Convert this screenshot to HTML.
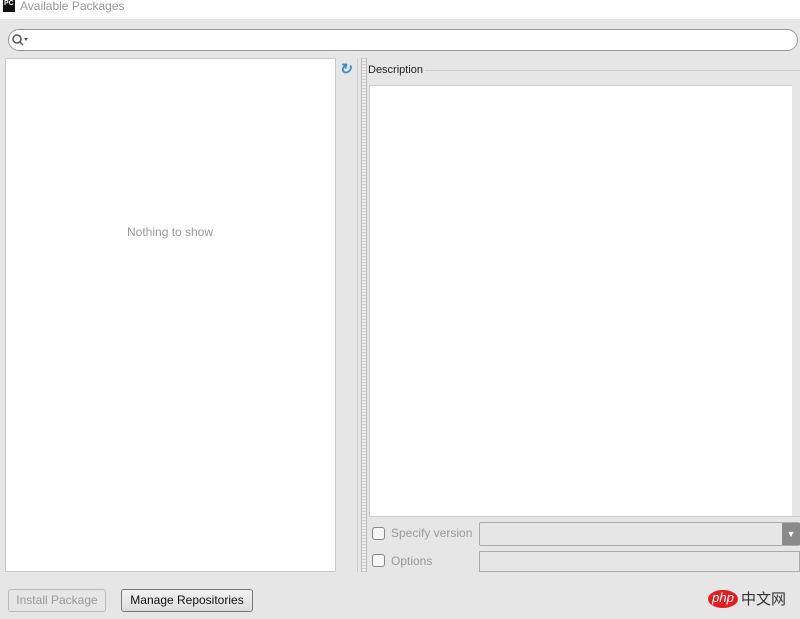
<!DOCTYPE html>
<html><head><style>
body{margin:0;width:800px;height:619px;background:#e6e6e6;font-family:"Liberation Sans",sans-serif;font-size:12px;position:relative;overflow:hidden}
.a{position:absolute;box-sizing:border-box}
</style></head><body>
<div class="a" style="left:0;top:0;width:800px;height:19px;background:#fff"></div>
<div class="a" style="left:3;top:0;left:3px;width:12px;height:12px;background:#111;color:#fff;font-size:7px;font-weight:bold;line-height:7px;padding-left:1px">PC</div>
<div class="a" style="left:20px;top:-1px;color:#999;font-size:12px">Available Packages</div>
<div class="a" style="left:8px;top:29px;width:790px;height:22px;background:#fff;border:1px solid #999;border-radius:11px"></div>
<svg class="a" style="left:11px;top:33px" width="18" height="14"><circle cx="6" cy="6" r="4" fill="none" stroke="#555" stroke-width="1.5"/><line x1="9" y1="9" x2="12" y2="12" stroke="#555" stroke-width="1.5"/><path d="M13 5h4l-2 3z" fill="#555"/></svg>
<div class="a" style="left:5px;top:58px;width:331px;height:514px;background:#fff;border:1px solid #c8c8c8"></div>
<div class="a" style="left:127px;top:225px;color:#999">Nothing to show</div>
<div class="a" style="left:336px;top:58px;width:22px;height:514px;background:#e6e6e6;border-right:1px solid #ccc"></div>
<div class="a" style="left:339px;top:60px;color:#3a8fd0;font-weight:bold;font-size:15px;font-style:italic">↻</div>
<div class="a" style="left:361px;top:58px;width:6px;height:514px;background:repeating-linear-gradient(#ccc 0 1px,#eee 1px 3px);border-left:1px solid #bbb;border-right:1px solid #bbb"></div>
<div class="a" style="left:368px;top:64px;font-size:11px;color:#222">Description</div>
<div class="a" style="left:425px;top:70px;width:375px;height:1px;background:#ccc"></div>
<div class="a" style="left:369px;top:85px;width:423px;height:432px;background:#fff;border-top:1px solid #ccc;border-left:1px solid #ccc"></div>
<div class="a" style="left:369px;top:516px;width:431px;height:1px;background:#ccc"></div>
<div class="a" style="left:372px;top:527px;width:13px;height:13px;border:1px solid #888;border-radius:3px;background:#f6f6f6"></div>
<div class="a" style="left:391px;top:526px;color:#999">Specify version</div>
<div class="a" style="left:479px;top:522px;width:321px;height:24px;border:1px solid #aaa;border-radius:2px;background:#e6e6e6"></div>
<div class="a" style="left:782px;top:523px;width:18px;height:22px;background:#8a8a8a;color:#fff;font-size:9px;text-align:center;line-height:22px">▼</div>
<div class="a" style="left:372px;top:554px;width:13px;height:13px;border:1px solid #888;border-radius:3px;background:#f6f6f6"></div>
<div class="a" style="left:391px;top:554px;color:#999">Options</div>
<div class="a" style="left:479px;top:551px;width:321px;height:21px;border:1px solid #aaa;background:#e6e6e6"></div>
<div class="a" style="left:8px;top:589px;width:98px;height:23px;border:1px solid #bbb;border-radius:3px;color:#999;text-align:center;line-height:21px">Install Package</div>
<div class="a" style="left:121px;top:589px;width:132px;height:23px;border:1px solid #777;border-radius:3px;background:linear-gradient(#f2f2f2,#dcdcdc);color:#111;text-align:center;line-height:21px">Manage Repositories</div>
<div class="a" style="left:708px;top:590px;width:30px;height:18px;border-radius:50%;background:#e02020;color:#fff;font-size:13px;text-align:center;line-height:16px;font-style:italic">php</div>
<div class="a" style="left:741px;top:589px;font-family:'Noto Sans CJK SC',sans-serif;font-size:15px;color:#333;line-height:20px">中文网</div>
</body></html>
